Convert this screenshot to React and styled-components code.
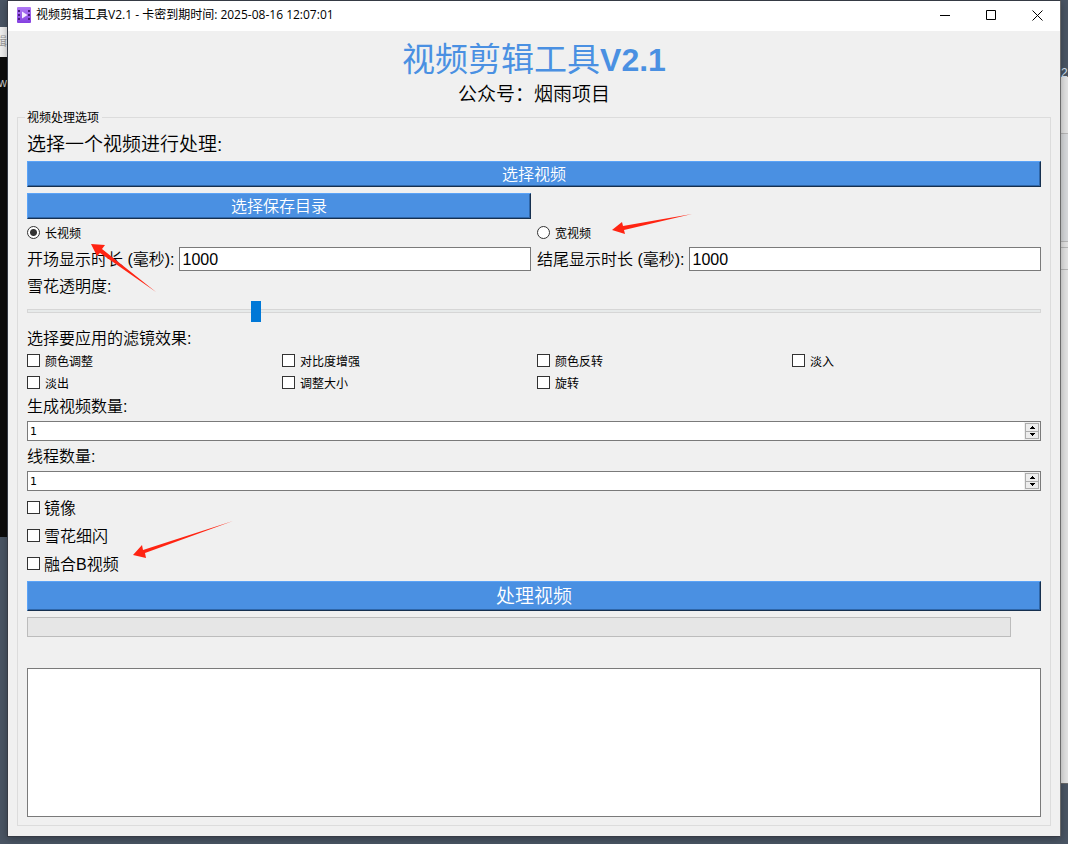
import React, { useState } from "react";
import styled, { createGlobalStyle } from "styled-components";

const FILTERS = ["颜色调整", "对比度增强", "颜色反转", "淡入", "淡出", "调整大小", "旋转"];
const EXTRAS = ["镜像", "雪花细闪", "融合B视频"];

const Arrow = ({ width, height, path, left, top }) => (
  <ArrowSvg width={width} height={height} viewBox={`0 0 ${width} ${height}`} $left={left} $top={top} aria-hidden="true">
    <path d={path} fill="#ff2412" />
  </ArrowSvg>
);

const AppIcon = () => (
  <svg width="14" height="16" viewBox="0 0 14 16" aria-hidden="true">
    <defs>
      <linearGradient id="film" x1="0" y1="0" x2="0" y2="1">
        <stop offset="0" stopColor="#b07af5" />
        <stop offset="1" stopColor="#8440e0" />
      </linearGradient>
    </defs>
    <rect width="14" height="16" rx="1" fill="url(#film)" />
    <path d="M1 3h2v2H1zM1 7h2v2H1zM1 11h2v2H1zM11 3h2v2h-2zM11 7h2v2h-2zM11 11h2v2h-2z" fill="#4c1d80" />
    <path d="M5 4.5L10.5 8L5 11.5z" fill="#f4ecff" />
  </svg>
);

const NumberField = ({ id, label }) => {
  const [value, setValue] = useState(1);
  return (
    <>
      <Label htmlFor={id}>{label}</Label>
      <Spin>
        <input id={id} type="number" min="1" value={value} onChange={(e) => setValue(Number(e.target.value))} />
        <div className="steps">
          <button type="button" aria-label="+" onClick={() => setValue(value + 1)}>
            <svg width="5" height="3" viewBox="0 0 5 3"><path d="M2 0h1v1h1v1h1v1H0V2h1V1h1z" /></svg>
          </button>
          <button type="button" aria-label="-" onClick={() => setValue(Math.max(1, value - 1))}>
            <svg width="5" height="3" viewBox="0 0 5 3"><path d="M0 0h5v1H4v1H3v1H2V2H1V1H0z" /></svg>
          </button>
        </div>
      </Spin>
    </>
  );
};

const App = () => {
  return (
    <Desktop>
      <GlobalStyle />
      <LeftStrip>
        <div className="caption">辑</div>
        <div className="console">w</div>
      </LeftStrip>

      <Window>
        <TitleBar>
          <AppIcon />
          <span>视频剪辑工具V2.1 - 卡密到期时间: 2025-08-16 12:07:01</span>
          <WindowButton type="button" aria-label="最小化">
            <svg width="11" height="11" viewBox="0 0 11 11"><path d="M0 5.5h10" /></svg>
          </WindowButton>
          <WindowButton type="button" aria-label="最大化">
            <svg width="11" height="11" viewBox="0 0 11 11"><path d="M0.5 0.5h9v9h-9z" /></svg>
          </WindowButton>
          <WindowButton type="button" aria-label="关闭">
            <svg width="11" height="11" viewBox="0 0 11 11"><path d="M0.5 0.5l10 10M10.5 0.5l-10 10" /></svg>
          </WindowButton>
        </TitleBar>

        <Body>
          <Title>视频剪辑工具<b>V2.1</b></Title>
          <Subtitle>公众号：烟雨项目</Subtitle>

          <Group>
            <legend>视频处理选项</legend>
            <Heading>选择一个视频进行处理:</Heading>
            <Button type="button">选择视频</Button>

            <Columns $count={2}>
              <Button type="button">选择保存目录</Button>
            </Columns>

            <Columns $count={2}>
              <Option>
                <input type="radio" name="shape" defaultChecked />
                长视频
                <Arrow width={66} height={49} left={64} top={19} path="M0 0L14 1L11 5L65 48L9 9L6 12z" />
              </Option>
              <Option>
                <input type="radio" name="shape" />
                宽视频
                <Arrow width={80} height={21} left={75} top={-11} path="M0 16L10 8L11 12L80 0L12 16L13 20z" />
              </Option>
            </Columns>

            <Columns $count={2}>
              <Field>
                <label htmlFor="opening">开场显示时长 (毫秒):</label>
                <input id="opening" type="text" defaultValue="1000" />
              </Field>
              <Field>
                <label htmlFor="ending">结尾显示时长 (毫秒):</label>
                <input id="ending" type="text" defaultValue="1000" />
              </Field>
            </Columns>

            <Label htmlFor="opacity">雪花透明度:</Label>
            <Slider id="opacity" type="range" min="1" max="10" defaultValue="3" />

            <Label as="p">选择要应用的滤镜效果:</Label>
            <Columns $count={4}>
              {FILTERS.map((name) => (
                <Option key={name}>
                  <input type="checkbox" />
                  {name}
                </Option>
              ))}
            </Columns>

            <NumberField id="videos" label="生成视频数量:" />
            <NumberField id="threads" label="线程数量:" />

            {EXTRAS.map((name) => (
              <Option key={name} $large>
                <input type="checkbox" />
                {name}
                {name === "融合B视频" && (
                  <Arrow width={100} height={38} left={106} top={-32} path="M0 34L9 24L10 29L100 0L12 32L13 37z" />
                )}
              </Option>
            ))}

            <Button type="button" $large>处理视频</Button>
            <Progress />
            <Status />
            <Log aria-label="日志" />
          </Group>
        </Body>
      </Window>

      <RightStrip>
        <div className="desk">2</div>
        <div className="panel" />
      </RightStrip>
    </Desktop>
  );
};

const GlobalStyle = createGlobalStyle`
  * {
    box-sizing: border-box;
  }

  body {
    margin: 0;
    background: #4a5564;
    color: #000;
    font-family: "Liberation Sans", "Noto Sans CJK SC", sans-serif;
    font-size: 16px;
    font-weight: 350;
  }

  button, input, textarea {
    font: inherit;
    color: inherit;
    margin: 0;
  }
`;

const Desktop = styled.div`
  display: grid;
  grid-template-columns: 7px minmax(0, 1fr) 7px;
  min-height: 100vh;
  background: #4a5564;
`;

const LeftStrip = styled.div`
  padding-top: 27px;
  overflow: hidden;

  .caption, .console {
    display: flex;
    justify-content: flex-end;
    font-size: 12px;
    line-height: 30px;
  }

  .caption {
    height: 30px;
    background: #f0f0f0;
    color: #999;
  }

  .console {
    height: 480px;
    padding-top: 11px;
    background: #0c0c0c;
    color: #ccc;
  }
`;

const RightStrip = styled.div`
  overflow: hidden;

  .desk {
    height: 77px;
    padding-top: 66px;
    overflow: hidden;
    color: #d5e4f5;
    font-size: 12px;
    line-height: 14px;
  }

  .panel {
    height: 707px;
    border-bottom: 1px solid #6b6b6b;
    background: linear-gradient(
      #e4e4e4 56px, #b8b8b8 56px, #b8b8b8 57px,
      #d8dadd 57px, #d8dadd 164px, #b8b8b8 164px, #b8b8b8 165px,
      #e4e4e4 165px, #e4e4e4 170px, #b8b8b8 170px, #b8b8b8 171px,
      #e4e4e4 171px, #e4e4e4 192px, #b8b8b8 192px, #b8b8b8 193px,
      #e4e4e4 193px
    );
  }
`;

const Window = styled.main`
  display: flex;
  flex-direction: column;
  margin-bottom: 7px;
  border: 1px solid #353a44;
  border-right-color: #6b6b6b;
  background: #f0f0f0;
  box-shadow: 0 2px 8px rgba(0, 0, 0, 0.3);
  z-index: 1;
`;

const TitleBar = styled.header`
  display: flex;
  align-items: center;
  height: 30px;
  padding: 0 0 2px 9px;
  background: #fff;
  font-family: "Open Sans", "Noto Sans CJK SC", sans-serif;
  font-size: 12px;
  font-weight: 400;

  span {
    flex: 1;
    margin-left: 5px;
    line-height: 18px;
  }
`;

const WindowButton = styled.button`
  display: flex;
  align-items: center;
  justify-content: center;
  width: 46px;
  height: 28px;
  padding: 0;
  border: none;
  background: none;

  svg {
    fill: none;
    stroke: #000;
  }
`;

const Body = styled.div`
  flex: 1;
  display: flex;
  flex-direction: column;
  padding: 9px 9px 10px;
`;

const Title = styled.h1`
  margin: 0;
  color: #4a90e2;
  font-size: 33px;
  font-weight: 400;
  line-height: 40px;
  text-align: center;

  b {
    font-size: 32px;
    font-weight: 700;
  }
`;

const Subtitle = styled.p`
  margin: 3px 0 1px;
  font-size: 19px;
  line-height: 24px;
  text-align: center;
`;

const Group = styled.fieldset`
  flex: 1;
  display: flex;
  flex-direction: column;
  gap: 6px;
  min-width: 0;
  margin: 0;
  padding: 5px 9px 8px;
  border: 1px solid #dcdcdc;

  legend {
    padding: 2px 3px 0 2px;
    margin-left: -2px;
    font-size: 12px;
    font-weight: 400;
    line-height: 16px;
  }
`;

const Heading = styled.p`
  height: 24px;
  margin: 0;
  font-size: 19px;
  line-height: 28px;
`;

const Label = styled.label`
  height: 18px;
  margin: 0;
  line-height: 20px;
`;

const Button = styled.button`
  height: ${(props) => (props.$large ? "30px" : "26px")};
  padding: 2px 0 0;
  border: 1px solid #16304f;
  border-top-color: #5ba3f7;
  border-left-color: #5ba3f7;
  background: #4a90e2;
  box-shadow: inset -1px -1px 0 #2f66a8;
  color: #fff;
  font-size: ${(props) => (props.$large ? "19px" : "16px")};
  line-height: 22px;
`;

const Columns = styled.div`
  display: grid;
  grid-template-columns: repeat(${(props) => props.$count}, minmax(0, 1fr));
  gap: 6px;
`;

const Option = styled.label`
  position: relative;
  display: flex;
  align-items: flex-start;
  gap: ${(props) => (props.$large ? "4px" : "5px")};
  height: ${(props) => (props.$large ? "22px" : "16px")};
  font-size: ${(props) => (props.$large ? "16px" : "12px")};
  font-weight: ${(props) => (props.$large ? 350 : 400)};
  line-height: ${(props) => (props.$large ? "24px" : "18px")};

  input {
    appearance: none;
    width: 13px;
    height: 13px;
    margin-top: ${(props) => (props.$large ? "4px" : "1px")};
    border: 1px solid #333;
    background: #fff;
  }

  input[type="radio"] {
    border-radius: 50%;
  }

  input[type="radio"]:checked {
    background: radial-gradient(circle, #333 3px, #fff 4px);
  }

  input[type="checkbox"]:checked {
    background: #333;
    box-shadow: inset 0 0 0 2px #fff;
  }
`;

const ArrowSvg = styled.svg`
  position: absolute;
  left: ${(props) => props.$left}px;
  top: ${(props) => props.$top}px;
  z-index: 2;
  pointer-events: none;
`;

const Field = styled.div`
  display: flex;
  gap: 4px;
  height: 24px;

  label {
    white-space: nowrap;
    line-height: 26px;
  }

  input {
    flex: 1;
    min-width: 0;
    padding: 2px 3px 0;
    border: 1px solid #7a7a7a;
    background: #fff;
    font-weight: 400;
  }
`;

const Slider = styled.input`
  appearance: none;
  width: 100%;
  height: 20px;
  margin-bottom: 2px;
  background: none;

  &::-webkit-slider-runnable-track {
    height: 4px;
    border: 1px solid #d6d6d6;
    background: #e7eaea;
  }

  &::-webkit-slider-thumb {
    appearance: none;
    width: 10px;
    height: 21px;
    margin-top: -9px;
    background: #0078d7;
  }
`;

const Spin = styled.div`
  display: flex;
  height: 20px;
  border: 1px solid #7a7a7a;
  background: #fff;

  input {
    flex: 1;
    min-width: 0;
    padding: 0 2px;
    border: none;
    background: none;
    font-family: "DejaVu Sans", sans-serif;
    font-size: 11px;
    font-weight: 400;
    appearance: textfield;
  }

  input::-webkit-inner-spin-button {
    appearance: none;
    margin: 0;
  }

  .steps {
    display: flex;
    flex-direction: column;
    width: 16px;
    padding: 1px;
    background: #f0f0f0;
  }

  button {
    flex: 1;
    display: flex;
    align-items: center;
    justify-content: center;
    padding: 0;
    border: 1px solid #adadad;
    background: #ededed;
  }

  button + button {
    border-top: none;
  }
`;

const Progress = styled.div.attrs({ role: "progressbar", "aria-valuenow": 0 })`
  height: 20px;
  margin-right: 30px;
  border: 1px solid #bcbcbc;
  background: #e6e6e6;
`;

const Status = styled.output`
  height: 19px;
`;

const Log = styled.textarea`
  flex: 1;
  min-height: 100px;
  border: 1px solid #7a7a7a;
  background: #fff;
  resize: none;
`;

export default App;
